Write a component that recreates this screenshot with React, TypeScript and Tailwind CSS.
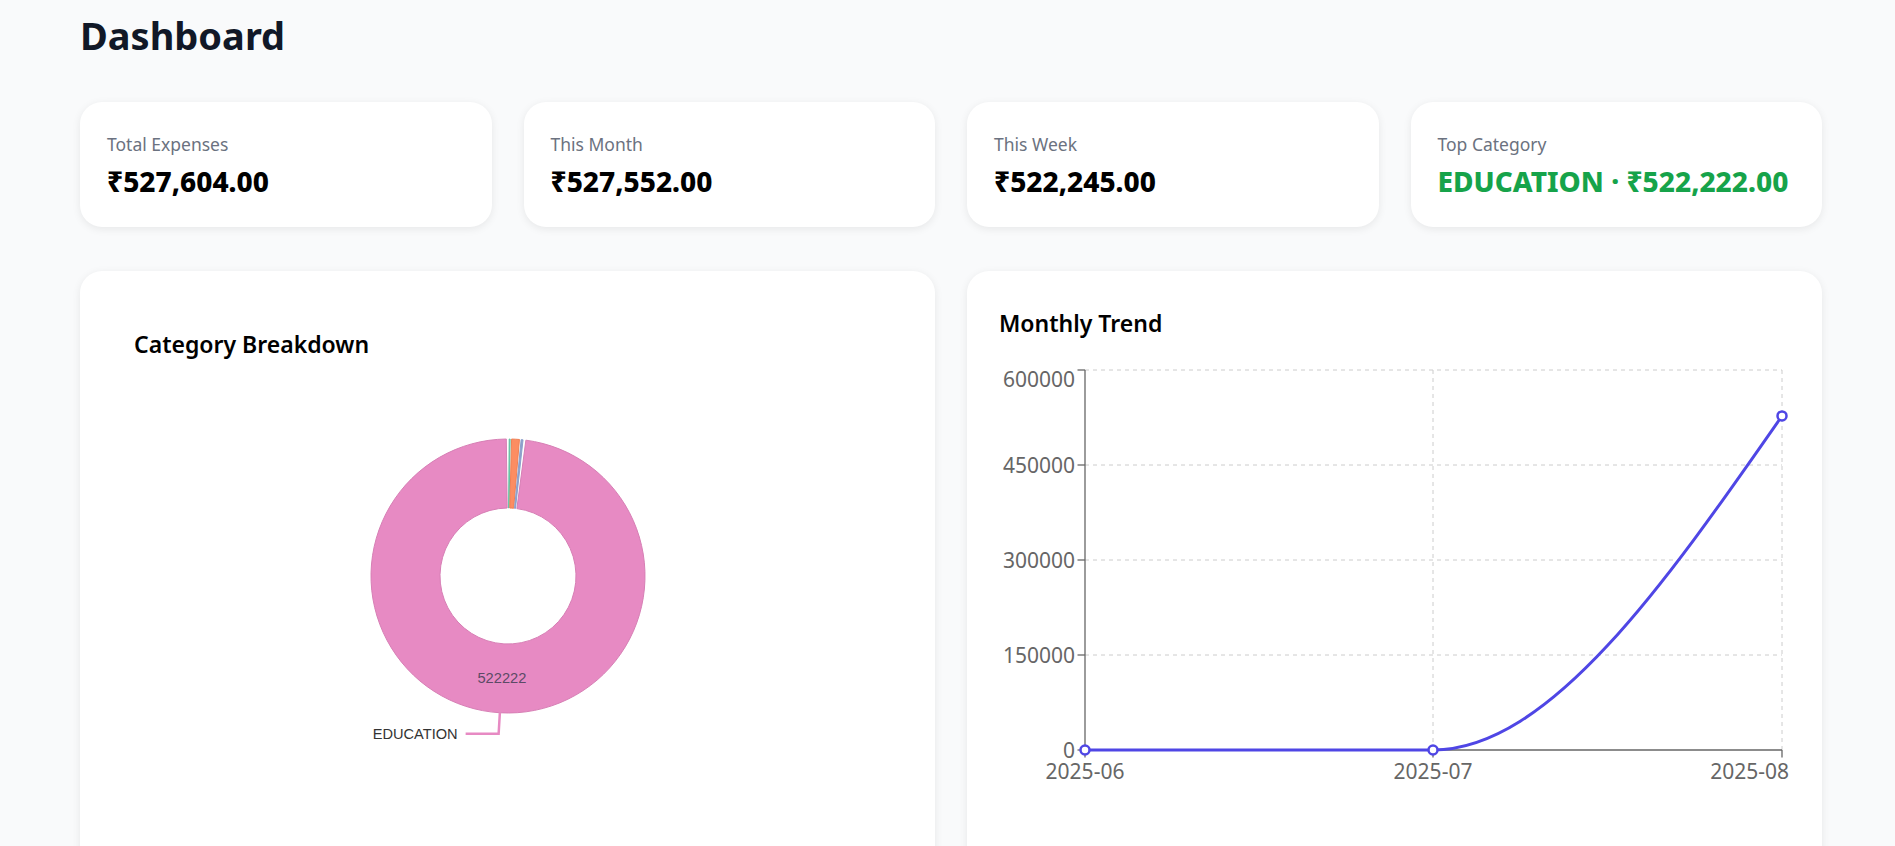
const stats = [
  { label: "Total Expenses", value: "₹527,604.00", green: false },
  { label: "This Month", value: "₹527,552.00", green: false },
  { label: "This Week", value: "₹522,245.00", green: false },
  { label: "Top Category", value: "EDUCATION · ₹522,222.00", green: true },
];

const slices = [
  { from: 0.5, to: 0.9, color: "#66c2a5", stroke: "#66c2a5" },
  { from: 1.5, to: 4.8, color: "#fc8d62", stroke: "#f08055" },
  { from: 5.5, to: 6.3, color: "#8da0cb", stroke: "#8da0cb" },
  { from: 7.5, to: 359.3, color: "#e78ac3", stroke: "#d77fb5" },
];

const CX = 200;
const CY = 200;
const R_OUT = 137;
const R_IN = 68;

function pt(deg: number, r: number) {
  const a = (deg * Math.PI) / 180;
  return [CX + r * Math.sin(a), CY - r * Math.cos(a)];
}

function sector(from: number, to: number) {
  const [x1, y1] = pt(from, R_OUT);
  const [x2, y2] = pt(to, R_OUT);
  const [x3, y3] = pt(to, R_IN);
  const [x4, y4] = pt(from, R_IN);
  const large = to - from > 180 ? 1 : 0;
  return `M${x1},${y1} A${R_OUT},${R_OUT} 0 ${large} 1 ${x2},${y2} L${x3},${y3} A${R_IN},${R_IN} 0 ${large} 0 ${x4},${y4} Z`;
}

function Donut() {
  const mid = 183.4;
  const [lx, ly] = pt(mid, (R_OUT + R_IN) / 2);
  const [sx, sy] = pt(mid, R_OUT);
  const [ex, ey] = pt(mid, R_OUT + 21);
  return (
    <svg width={400} height={400} className="mx-auto mt-4 block">
      {slices.map((s, i) => (
        <path key={i} d={sector(s.from, s.to)} fill={s.color} stroke={s.stroke} strokeWidth={1} />
      ))}
      <text
        x={lx}
        y={ly}
        textAnchor="middle"
        dominantBaseline="central"
        fill="#5c4a66"
        fontSize={14.7}
        fontFamily="'Liberation Sans', Arial, sans-serif"
      >
        522222
      </text>
      <polyline
        points={`${sx},${sy} ${ex},${ey} ${ex - 33},${ey}`}
        fill="none"
        stroke="#e78ac3"
        strokeWidth={2.5}
      />
      <text
        x={ex - 41}
        y={ey}
        textAnchor="end"
        dominantBaseline="central"
        fill="#333"
        fontSize={14.6}
        fontFamily="'Liberation Sans', Arial, sans-serif"
      >
        EDUCATION
      </text>
    </svg>
  );
}

function TrendChart() {
  const ax = 86;
  const xs = [86, 434, 783];
  const ys = [20, 115, 210, 305, 400];
  const ticks = ["600000", "450000", "300000", "150000", "0"];
  const months = ["2025-06", "2025-07", "2025-08"];
  const lastY = 400 - (527552 / 600000) * 380;
  const path = `M86,400 L434,400 C550.33,400 666.67,${lastY + 116.33 * 1.436} 783,${lastY}`;
  return (
    <svg width={791} height={440} className="mt-[11px] block overflow-visible">
      {ys.slice(0, 4).map((y) => (
        <line key={y} x1={ax} x2={783} y1={y} y2={y} stroke="#ccc" strokeDasharray="4 4" />
      ))}
      {xs.slice(1).map((x) => (
        <line key={x} x1={x} x2={x} y1={20} y2={400} stroke="#ccc" strokeDasharray="4 4" />
      ))}
      <line x1={ax} x2={ax} y1={20} y2={400} stroke="#666" strokeWidth={1.3} />
      <line x1={ax} x2={783} y1={400} y2={400} stroke="#666" strokeWidth={1.3} />
      {ys.map((y, i) => (
        <g key={y}>
          <line x1={78.5} x2={ax} y1={y} y2={y} stroke="#666" strokeWidth={1.3} />
          <text
            x={76}
            y={i === 0 ? y + 9 : y}
            textAnchor="end"
            dominantBaseline="central"
            fill="#666"
            fontSize={21}
          >
            {ticks[i]}
          </text>
        </g>
      ))}
      {xs.map((x, i) => (
        <g key={x}>
          <line x1={x} x2={x} y1={400} y2={407.5} stroke="#666" strokeWidth={1.3} />
          <text
            x={i === 2 ? 790 : x}
            y={429}
            textAnchor={i === 2 ? "end" : "middle"}
            fill="#666"
            fontSize={21}
          >
            {months[i]}
          </text>
        </g>
      ))}
      <path d={path} fill="none" stroke="#4f46e5" strokeWidth={3} />
      {[
        [86, 400],
        [434, 400],
        [783, lastY],
      ].map(([x, y]) => (
        <circle key={x} cx={x} cy={y} r={4.5} fill="#fff" stroke="#4f46e5" strokeWidth={2.5} />
      ))}
    </svg>
  );
}

export default function App() {
  return (
    <div
      className="h-[846px] overflow-hidden bg-[#f9fafb] pl-[80px] pr-[73px] pt-[8px]"
      style={{ fontFamily: "'Noto Sans', sans-serif" }}
    >
      <h1 className="text-[38px] leading-[54px] font-bold text-[#111827]">Dashboard</h1>

      <div className="mt-[40px] grid grid-cols-4 gap-8">
        {stats.map((s) => (
          <div
            key={s.label}
            className="flex h-[125px] flex-col justify-center gap-[6px] rounded-[22px] bg-white px-[27px] shadow-[0_2px_8px_rgba(0,0,0,0.08)]"
          >
            <div className="text-[17.5px] leading-[26px] text-[#6b7280]">{s.label}</div>
            <div
              className={
                s.green
                  ? "text-[28px] leading-[36px] font-extrabold text-[#16a34a]"
                  : "text-[28px] leading-[36px] font-extrabold text-black"
              }
            >
              {s.value}
            </div>
          </div>
        ))}
      </div>

      <div className="mt-[44px] grid grid-cols-2 gap-8">
        <div className="h-[620px] rounded-[22px] bg-white p-[30px] shadow-[0_2px_8px_rgba(0,0,0,0.08)]">
          <div className="px-[24px] pt-[27px]">
            <h2 className="text-[23px] leading-[32px] font-semibold text-black">Category Breakdown</h2>
            <Donut />
          </div>
        </div>
        <div className="h-[620px] rounded-[22px] bg-white px-[32px] pt-[36px] shadow-[0_2px_8px_rgba(0,0,0,0.08)]">
          <h2 className="text-[23px] leading-[32px] font-semibold text-black">Monthly Trend</h2>
          <TrendChart />
        </div>
      </div>
    </div>
  );
}
